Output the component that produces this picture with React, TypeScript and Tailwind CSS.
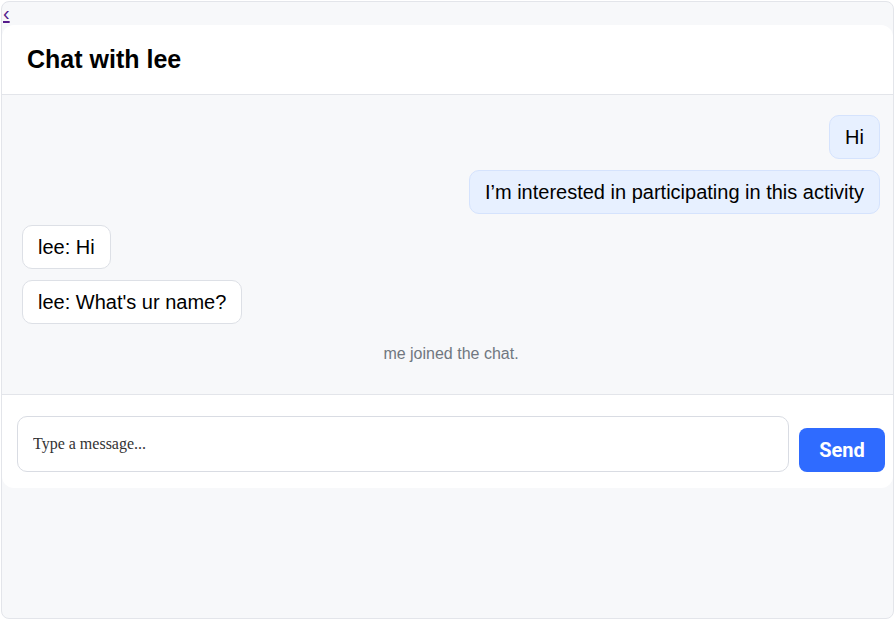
const messages = [
  { id: 1, mine: true, text: "Hi" },
  { id: 2, mine: true, text: "I’m interested in participating in this activity" },
  { id: 3, mine: false, text: "lee: Hi" },
  { id: 4, mine: false, text: "lee: What's ur name?" },
];

export default function App() {
  return (
    <div className="pl-px pt-px font-['Liberation_Sans',Arial,sans-serif]">
      <div className="flex h-[618px] w-[893px] flex-col rounded-lg border border-[#e3e5ea] bg-[#f7f8fa]">
        <div className="h-[23px] pl-px text-[20px] leading-[23px]">
          <a href="#" className="text-[#551a8b] underline">
            ‹
          </a>
        </div>
        <section className="rounded-xl bg-white">
          <header className="border-b border-[#e3e5ea] px-[25px] py-[18px]">
            <h1 className="text-[25px] font-bold leading-[33px] text-black">
              Chat with lee
            </h1>
          </header>

          <div className="flex flex-col gap-[11px] border-b border-[#e3e5ea] bg-[#f7f8fa] pb-[30px] pl-[20px] pr-[13px] pt-[20px]">
            {messages.map((message) => (
              <div
                key={message.id}
                className={`flex ${message.mine ? "justify-end" : "justify-start"}`}
              >
                <div
                  className={`rounded-[10px] border px-[15px] py-[9px] text-[20px] leading-[24px] text-black ${
                    message.mine
                      ? "border-[#d5e3fd] bg-[#e7f0ff]"
                      : "border-[#dde0e6] bg-white"
                  }`}
                >
                  {message.text}
                </div>
              </div>
            ))}
            <p className="mt-[9px] text-center text-[16px] leading-[20px] text-[#707780]">
              me joined the chat.
            </p>
          </div>

          <form
            className="flex items-end gap-[10px] pb-[16px] pl-[15px] pr-[8px] pt-[21px]"
            onSubmit={(event) => event.preventDefault()}
          >
            <input
              type="text"
              placeholder="Type a message..."
              className="h-[56px] flex-1 rounded-[10px] border border-[#d9dce3] px-[15px] font-['Liberation_Serif',serif] text-[16px] text-[#222] outline-none placeholder:text-[#333]"
            />
            <button
              type="submit"
              className="h-[44px] w-[86px] rounded-[8px] bg-[#2f6bff] font-['Roboto',Arial,sans-serif] text-[20px] font-bold text-white"
            >
              Send
            </button>
          </form>
        </section>
      </div>
    </div>
  );
}
